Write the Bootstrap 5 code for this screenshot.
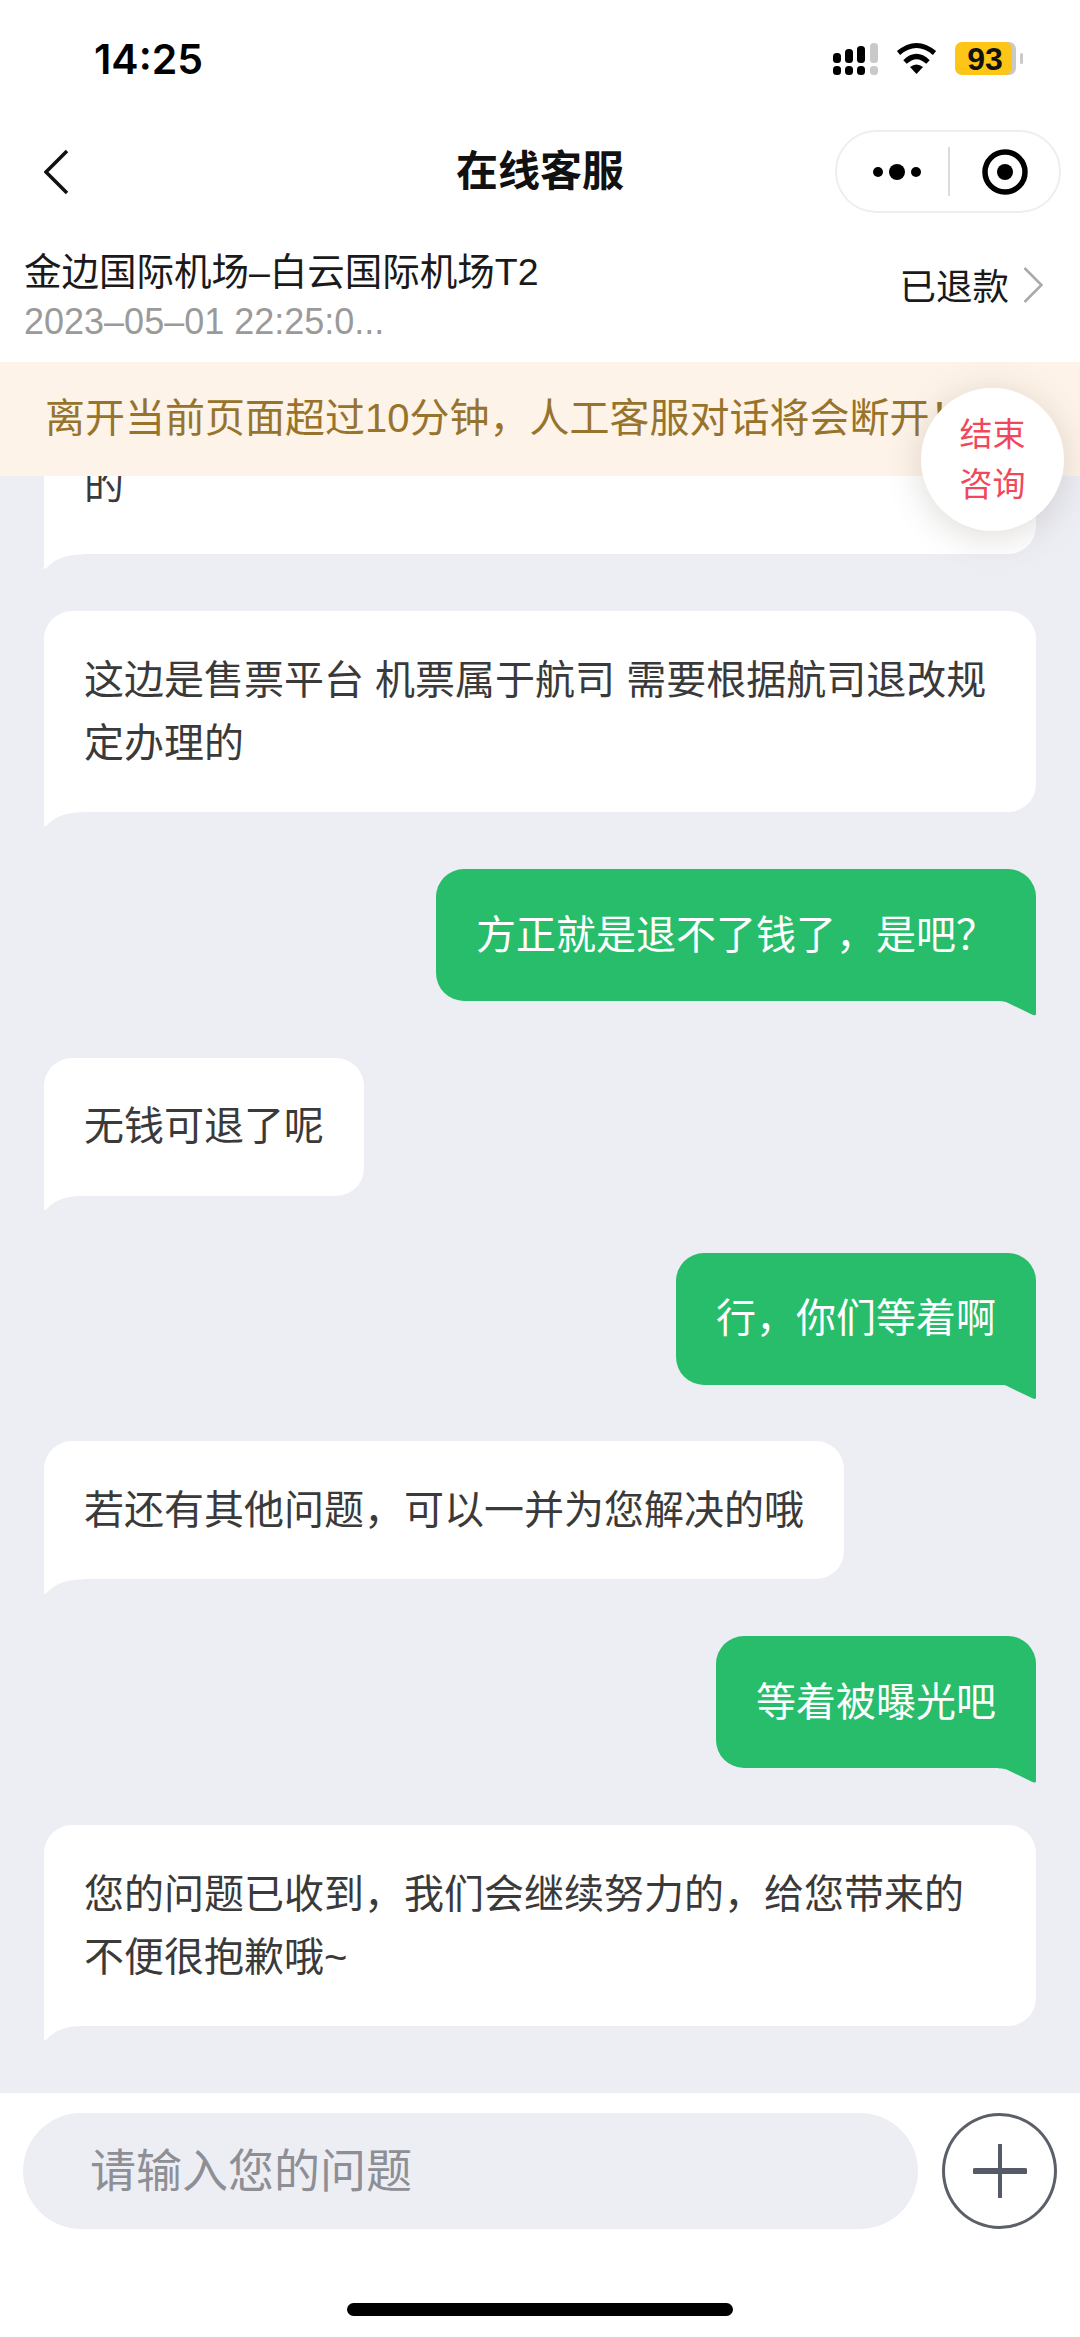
<!DOCTYPE html>
<html lang="zh-CN">
<head>
  <meta charset="UTF-8">
  <title>在线客服</title>
  <meta name="viewport" content="width=device-width, initial-scale=1">
  <link href="https://cdn.jsdelivr.net/npm/bootstrap@5.3.3/dist/css/bootstrap.min.css" rel="stylesheet">
  <style>
    body {
      margin: 0;
      background: #fff;
      font-family: "Liberation Sans", "Noto Sans CJK SC", sans-serif;
    }
    .app-shell { width: 1080px; height: 2337px; overflow: hidden; }
    .status-row { height: 130px; padding: 42px 56px 0 94px; }
    .status-time { font: 600 41px/34px Inter, "Liberation Sans", sans-serif; color: #000; }
    .title-row {
      height: 83px;
      display: grid;
      grid-template-columns: minmax(0, 1fr) auto minmax(0, 1fr);
      padding: 0 19px;
    }
    .back-icon { margin-left: 25px; }
    .title-text { font-size: 42px; font-weight: 700; line-height: 83px; color: #111; }
    .capsule {
      width: 226px;
      height: 83px;
      border: 2px solid #eeeeee;
      background: #fff;
    }
    .capsule-line { width: 2px; height: 49px; background: #dcdcdc; }
    .order-row { height: 149px; padding: 36px 37px 0 24px; }
    .order-name { font-size: 37.5px; line-height: 46px; color: #1a1a1a; }
    .order-date { font-size: 36px; line-height: 46px; margin-top: 4px; color: #9a9a9a; }
    .order-state-wrap { margin-top: 16px; gap: 14px; }
    .order-state { font-size: 36.5px; line-height: 46px; color: #1a1a1a; }
    .order-chevron { margin-bottom: 6px; }
    .notice-bar {
      height: 114px;
      padding-left: 45px;
      background: #fdf3e8;
      color: #97732c;
      font-size: 40px;
      line-height: 112px;
      white-space: nowrap;
      overflow: hidden;
    }
    .end-button {
      position: absolute;
      left: 921px;
      top: 388px;
      width: 143px;
      height: 143px;
      padding: 0;
      border: 0;
      background: #fff;
      color: #f2475b;
      font-size: 33px;
      line-height: 50px;
      box-shadow: 0 6px 36px rgba(90, 80, 70, .2);
      z-index: 5;
    }
    .chat-area {
      flex: 1 1 0;
      background: #edeef4;
      padding: 0 44px 67px;
      gap: 56.8px;
      min-height: 0;
      overflow: hidden;
    }
    .bubble {
      position: relative;
      flex: none;
      max-width: 992px;
      padding: 37.5px 40px;
      border-radius: 28px;
      font-size: 40px;
      line-height: 63px;
    }
    .bubble-in { align-self: flex-start; background: #fff; color: #3a3a3a; border-bottom-left-radius: 0; }
    .bubble-out {
      align-self: flex-end;
      padding-top: 34.5px;
      padding-bottom: 34.5px;
      background: #27bd6a;
      color: #fff;
      border-bottom-right-radius: 0;
    }
    /* 尾巴は1px重ねて継ぎ目を消す */
    .bubble-in::after, .bubble-out::after {
      content: "";
      position: absolute;
      top: calc(100% - 1px);
      width: 38px;
      height: 16px;
    }
    .bubble-in::after { left: 0; background: #fff; clip-path: path("M0 0H38V1Q14 1 2 15Q0 16 0 14Z"); }
    .bubble-out::after { right: 0; background: #27bd6a; clip-path: path("M0 0H38V14Q38 16 35 15L8 2Q4 1 0 1Z"); }
    .first-cut { width: 992px; }
    .composer { height: 244px; padding: 20px 23px 0; gap: 24px; position: relative; }
    .composer-input {
      width: 895px;
      height: 116px;
      padding: 0 0 0 67px;
      border: 0;
      background: #edeef4;
      font-size: 46px;
      color: #333;
    }
    .composer-input::placeholder { color: #8e8f94; opacity: 1; }
    .plus-button {
      width: 115px;
      height: 116px;
      padding: 0;
      border: 3px solid #5b5f68;
      background: #fff;
    }
    .home-line {
      position: absolute;
      left: 347px;
      top: 210px;
      width: 386px;
      height: 13px;
      background: #000;
    }
  </style>
</head>
<body>
  <div class="app-shell d-flex flex-column">
    <div class="status-row d-flex justify-content-between align-items-start flex-shrink-0">
      <span class="status-time">14:25</span>
      <svg width="191" height="34" viewBox="834 42 191 34">
        <g fill="#000">
          <rect x="834" y="53" width="8" height="10" rx="3.5"/>
          <rect x="846" y="49" width="8" height="14" rx="3.5"/>
          <rect x="858" y="46" width="8" height="17" rx="3.5"/>
          <rect x="834" y="66" width="8" height="9" rx="3.5"/>
          <rect x="846" y="66" width="8" height="9" rx="3.5"/>
          <rect x="858" y="66" width="8" height="9" rx="3.5"/>
        </g>
        <g fill="#c9c9cc">
          <rect x="871" y="43" width="8" height="20" rx="3.5"/>
          <rect x="871" y="66" width="8" height="9" rx="3.5"/>
        </g>
        <g fill="none" stroke="#000" stroke-width="5">
          <path d="M899.5 53Q917.5 38 935.5 53"/>
          <path d="M906 62Q917.5 51 929 62"/>
        </g>
        <path d="M917.5 74L911 67Q917.5 62 924 67Z" fill="#000"/>
        <rect x="960" y="42" width="57" height="33" rx="7" fill="#c9c9cc"/>
        <rect x="956" y="42" width="57" height="33" rx="7" fill="#fdc516"/>
        <rect x="1021" y="53" width="3" height="11" rx="1.5" fill="#c9c9cc"/>
        <text x="986" y="70" text-anchor="middle" font-family="Liberation Sans" font-weight="700" font-size="32" fill="#111">93</text>
      </svg>
    </div>

    <div class="title-row align-items-center flex-shrink-0">
      <svg class="back-icon" width="26" height="46" viewBox="0 0 26 46">
        <path d="M23 2L2 23L23 44" fill="none" stroke="#111" stroke-width="3.5"/>
      </svg>
      <div class="title-text">在线客服</div>
      <div class="d-flex justify-content-end">
        <div class="capsule rounded-pill d-flex align-items-center">
          <svg class="flex-shrink-0" width="111" height="30" viewBox="835 158 111 30">
            <circle cx="876" cy="173" r="5" fill="#000"/>
            <circle cx="895" cy="173" r="8" fill="#000"/>
            <circle cx="914" cy="173" r="5" fill="#000"/>
          </svg>
          <span class="capsule-line"></span>
          <svg class="flex-shrink-0 ms-auto me-auto" width="46" height="46" viewBox="0 0 46 46">
            <circle cx="23" cy="23" r="20" fill="none" stroke="#000" stroke-width="5.5"/>
            <circle cx="23" cy="23" r="8" fill="#000"/>
          </svg>
        </div>
      </div>
    </div>

    <div class="order-row d-flex justify-content-between align-items-start flex-shrink-0">
      <div>
        <div class="order-name">金边国际机场–白云国际机场T2</div>
        <div class="order-date">2023–05–01 22:25:0...</div>
      </div>
      <div class="order-state-wrap d-flex align-items-center">
        <span class="order-state">已退款</span>
        <svg class="order-chevron" width="20" height="36" viewBox="0 0 20 36">
          <path d="M1.5 1L18.5 18L1.5 35" fill="none" stroke="#a9a9a9" stroke-width="2.5"/>
        </svg>
      </div>
    </div>

    <div class="notice-bar flex-shrink-0">离开当前页面超过10分钟，人工客服对话将会断开！</div>
    <button type="button" class="end-button rounded-circle">结束<br>咨询</button>

    <div class="chat-area d-flex flex-column justify-content-end">
      <div class="bubble bubble-in first-cut">的</div>
      <div class="bubble bubble-in">这边是售票平台 机票属于航司 需要根据航司退改规定办理的</div>
      <div class="bubble bubble-out">方正就是退不了钱了，是吧？</div>
      <div class="bubble bubble-in">无钱可退了呢</div>
      <div class="bubble bubble-out">行，你们等着啊</div>
      <div class="bubble bubble-in">若还有其他问题，可以一并为您解决的哦</div>
      <div class="bubble bubble-out">等着被曝光吧</div>
      <div class="bubble bubble-in">您的问题已收到，我们会继续努力的，给您带来的不便很抱歉哦~</div>
    </div>

    <div class="composer d-flex align-items-start flex-shrink-0">
      <input class="composer-input form-control rounded-pill flex-shrink-0" type="text" placeholder="请输入您的问题">
      <button type="button" class="plus-button rounded-circle d-flex align-items-center justify-content-center flex-shrink-0" aria-label="更多">
        <svg width="54" height="54" viewBox="0 0 54 54">
          <path d="M27 1V53" stroke="#555b66" stroke-width="4" stroke-linecap="round"/>
          <path d="M2 27H52" stroke="#555b66" stroke-width="6" stroke-linecap="round"/>
        </svg>
      </button>
      <div class="home-line rounded-pill"></div>
    </div>
  </div>
</body>
</html>
